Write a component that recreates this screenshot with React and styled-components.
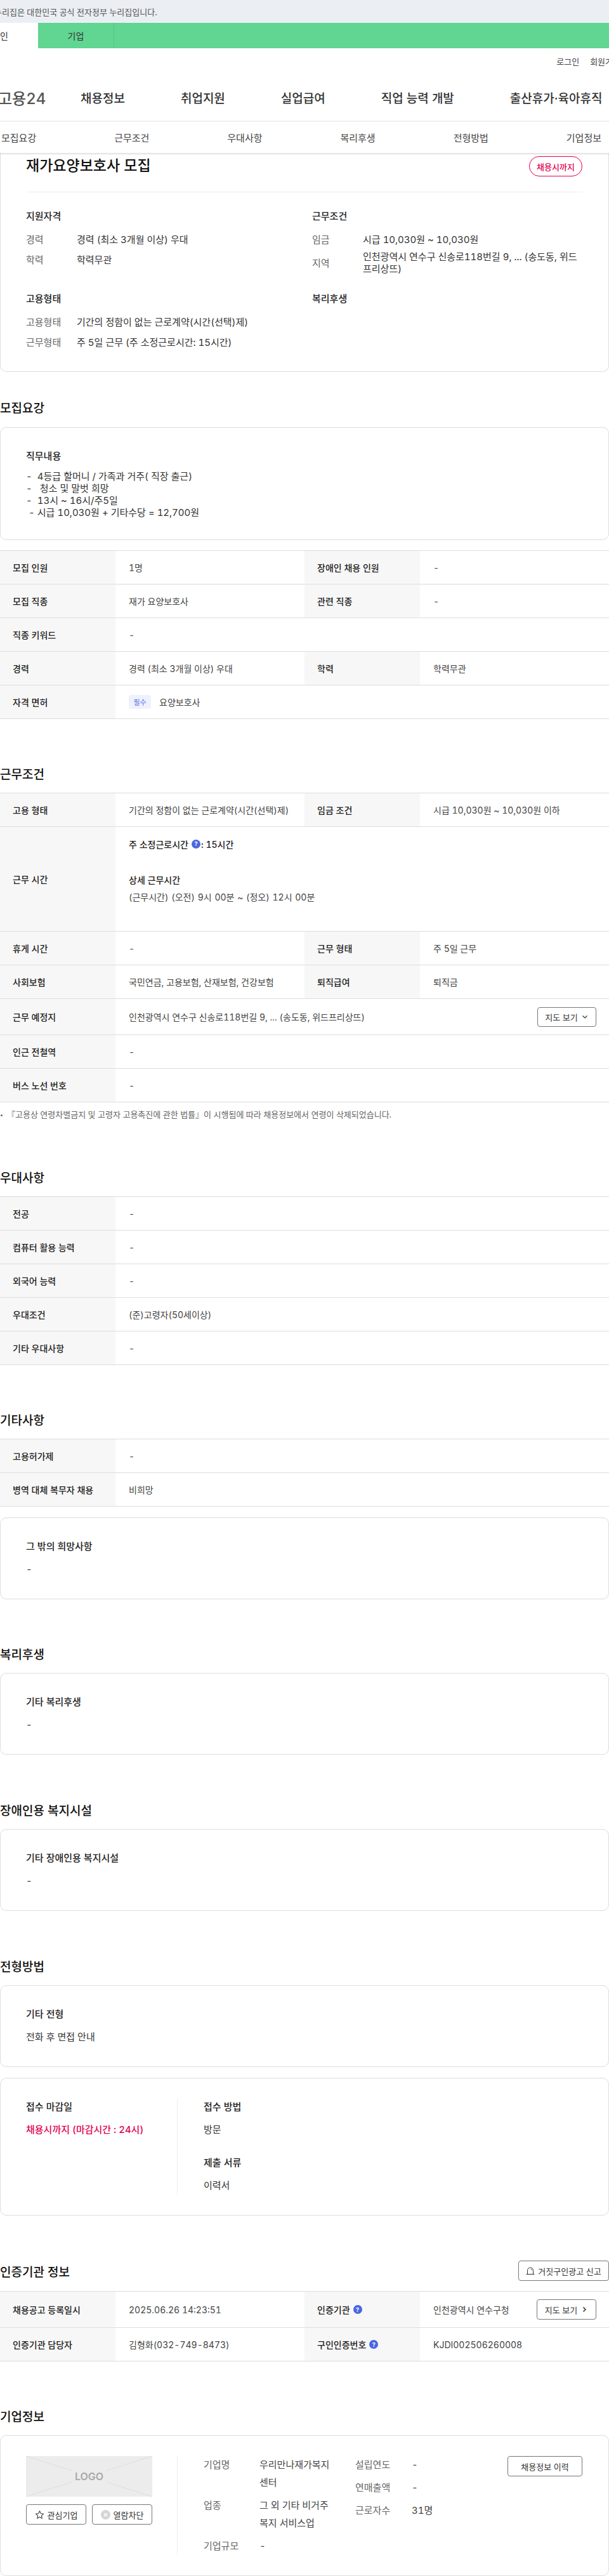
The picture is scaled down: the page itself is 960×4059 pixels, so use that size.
import styled, { createGlobalStyle } from "styled-components";

const GlobalStyle = createGlobalStyle`
  * {
    box-sizing: border-box;
  }

  body {
    margin: 0;
    background: #fff;
    color: #222;
    font-family: "Inter", "Noto Sans CJK KR", sans-serif;
    font-size: 14px;
    font-variant-numeric: tabular-nums;
    overflow-x: hidden;
  }
`

const Page = styled.div`
  width: 960px;
  height: 4059px;
  overflow: hidden;
`

const GovBar = styled.div`
  height: 36px;
  display: flex;
  align-items: center;
  background: #ebeff4;
  color: #555;
  font-size: 13px;
  white-space: nowrap;
  overflow: hidden;

  span {
    margin-left: -9px;
  }
`

const UserTabs = styled.div`
  height: 40px;
  display: flex;
  background: #61d592;
  color: #333;
  font-size: 14px;
`

const UserTab = styled.div`
  display: flex;
  align-items: center;
  justify-content: ${({ $active }) => ($active ? "flex-start" : "center")};
  width: ${({ $active }) => ($active ? "60px" : "120px")};
  background: ${({ $active }) => ($active ? "#fff" : "transparent")};
  border-right: ${({ $active }) => ($active ? "none" : "1px solid #55c684")};
`

const UtilRow = styled.div`
  height: 40px;
  display: flex;
  justify-content: flex-end;
  align-items: center;
  gap: 17px;
  margin-right: -18px;
  font-size: 13px;
  color: #444;
  white-space: nowrap;
`

const MainNav = styled.div`
  height: 76px;
  display: flex;
  align-items: center;
  border-bottom: 2px solid #eee;
  white-space: nowrap;
`

const Brand = styled.div`
  width: 130px;
  margin-left: -3px;
  font-size: 24px;
  font-weight: 500;
  color: #555;
  flex: none;
`

const NavList = styled.div`
  display: flex;
  gap: 88px;
  font-size: 19px;
  font-weight: 500;
  color: #333;
`

const SubNav = styled.div`
  height: 49px;
  display: flex;
  justify-content: space-between;
  align-items: center;
  padding: 0 12px 0 2px;
  font-size: 15px;
  color: #444;
  box-shadow: 0 2px 2px rgba(0, 0, 0, 0.12);
  position: relative;
`

const Card = styled.section`
  height: ${({ $h }) => $h || 129}px;
  margin-top: ${({ $mt }) => $mt ?? 15}px;
  margin-bottom: ${({ $mb }) => $mb || 0}px;
  padding: ${({ $pad }) => $pad || "35px 40px 0"};
  border: 1px solid #ddd;
  border-radius: 10px;
`

const Summary = styled(Card)`
  border-top: none;
  border-radius: 0 0 10px 10px;
  padding: 5px 41px 0 40px;
`

const TitleRow = styled.div`
  height: 57px;
  display: flex;
  justify-content: space-between;
  align-items: flex-start;
  border-bottom: 1px solid #eee;
`

const JobTitle = styled.h1`
  margin: 0;
  font-size: 23px;
  font-weight: 500;
  line-height: 30px;
  color: #111;
`

const DeadlineBadge = styled.div`
  width: 84px;
  height: 32px;
  display: flex;
  align-items: center;
  justify-content: center;
  border: 1px solid #e5004f;
  border-radius: 16px;
  color: #e5004f;
  font-size: 13px;
  font-weight: 500;
`

const SummaryGrid = styled.div`
  display: grid;
  grid-template-columns: 451px 1fr;
  grid-template-rows: 130px auto;
  padding-top: 28px;
`

const InfoRow = styled.dl`
  display: grid;
  grid-template-columns: 80px 1fr;
  align-items: center;
  margin: ${({ $mt }) => $mt || 13}px 0 0;
  font-size: 15px;
  line-height: 19px;
  color: #333;

  dt {
    color: #666;
  }

  dd {
    margin: 0;
  }
`

const SectionHead = styled.div`
  height: 32px;
  display: flex;
  align-items: center;
  justify-content: space-between;
  margin-top: ${({ $mt }) => $mt || 0}px;
`

const SectionTitle = styled.h2`
  margin: 0;
  font-size: 19px;
  font-weight: 500;
  color: #111;
`

const CardTitle = styled.div`
  margin-top: ${({ $mt }) => $mt || 0}px;
  font-size: 15px;
  line-height: 20px;
  font-weight: 500;
  color: #222;
`

const CardText = styled.div`
  margin-top: 16px;
  font-size: 15px;
  line-height: 20px;
  color: ${({ $red }) => ($red ? "#e5004f" : "#333")};
  font-weight: ${({ $red }) => ($red ? 500 : 400)};
`

const Description = styled.div`
  margin-top: 12px;
  font-size: 15px;
  line-height: 19px;
  color: #333;
  white-space: pre-wrap;
`

const Table = styled.div`
  border-top: 1px solid #ddd;
  margin-top: ${({ $mt }) => $mt ?? 15}px;
`

const Row = styled.div`
  min-height: ${({ $h }) => $h || 53}px;
  display: grid;
  grid-template-columns: ${({ $wide }) => ($wide ? "182px 1fr" : "182px 298px 182px 298px")};
  border-bottom: 1px solid #ddd;
`

const Th = styled.div`
  display: flex;
  align-items: center;
  gap: 5px;
  padding-left: 20px;
  background: #f7f7f7;
  font-size: 14px;
  font-weight: 500;
  color: #222;
`

const Td = styled.div`
  display: flex;
  align-items: center;
  justify-content: ${({ $between }) => ($between ? "space-between" : "flex-start")};
  padding: 0 20px 0 21px;
  font-size: 14px;
  color: #444;
  white-space: nowrap;
`

const HoursCell = styled.div`
  padding: 13px 21px 0;
  font-size: 14px;
  color: #444;
`

const HoursLine = styled.div`
  display: flex;
  align-items: center;
  height: 27px;
  margin-top: ${({ $mt }) => $mt || 0}px;
  color: ${({ $strong }) => ($strong ? "#222" : "#444")};
  font-weight: ${({ $strong }) => ($strong ? 500 : 400)};
  word-spacing: ${({ $strong }) => ($strong ? 0 : 1)}px;
`

const Tag = styled.span`
  width: 35px;
  height: 22px;
  display: inline-flex;
  align-items: center;
  justify-content: center;
  margin-right: 13px;
  border-radius: 3px;
  background: #eff1fd;
  color: #5a70e8;
  font-size: 11px;
`

const HelpDot = styled.span`
  width: 14px;
  height: 14px;
  display: inline-flex;
  align-items: center;
  justify-content: center;
  flex: none;
  border-radius: 50%;
  background: #4a67e0;
  color: #fff;
  font-size: 9px;
  font-weight: 700;
  margin: ${({ $m }) => $m || 0};
`

const Button = styled.button`
  height: ${({ $h }) => $h || 32}px;
  width: ${({ $w }) => $w}px;
  flex: none;
  display: inline-flex;
  align-items: center;
  justify-content: center;
  gap: 5px;
  padding: 0;
  background: #fff;
  border: 1px solid #777;
  border-radius: 4px;
  color: #333;
  font-family: inherit;
  font-size: 13px;
`

const Note = styled.p`
  margin: 10px 0 0;
  padding-left: 11px;
  position: relative;
  font-size: 13px;
  line-height: 19px;
  color: #666;

  &::before {
    content: "";
    position: absolute;
    left: 1px;
    top: 9px;
    width: 3px;
    height: 3px;
    border-radius: 50%;
    background: #666;
  }
`

const ApplyGrid = styled.div`
  display: grid;
  grid-template-columns: 239px 1fr;
`

const ApplyLeft = styled.div`
  padding-top: 3px;
  border-right: 1px solid #eee;
`

const ApplyRight = styled.div`
  padding: 3px 0 5px 41px;
`

const CompanyGrid = styled.div`
  display: grid;
  grid-template-columns: 239px 280px 240px 1fr;
`

const LogoSide = styled.div`
  border-right: 1px solid #eee;
  height: 156px;
`

const LogoBox = styled.div`
  width: 199px;
  height: 64px;
  position: relative;
  display: flex;
  align-items: center;
  justify-content: center;
  background: #ececec;
  color: #a8a8a8;
  font-size: 16px;
  font-weight: 600;

  svg {
    position: absolute;
    inset: 0;
  }

  span {
    position: relative;
  }
`

const LogoButtons = styled.div`
  display: flex;
  justify-content: space-between;
  width: 199px;
  margin-top: 12px;
`

const CompanyCol = styled.div`
  display: flex;
  flex-direction: column;
  padding-left: ${({ $pl }) => $pl || 0}px;
`

const CompanyRow = styled.dl`
  display: grid;
  grid-template-columns: ${({ $k }) => $k}px 1fr;
  margin: 0 0 ${({ $mb }) => $mb || 0}px;
  font-size: 15px;
  line-height: 28px;
  color: #444;

  dt {
    color: #666;
  }

  dd {
    margin: 0;
    width: ${({ $w }) => $w || "auto"};
  }
`

const CompanyAction = styled.div`
  display: flex;
  justify-content: flex-end;
`

const Chevron = ({ d, w = 1.2 }) => (
    <svg width="12" height="12" viewBox="0 0 12 12" fill="none" stroke="#333" strokeWidth={w}>
        <path d={d}/>
    </svg>
)

const ReportIcon = () => (
    <svg width="14" height="14" viewBox="0 0 14 14" fill="none" stroke="#333" strokeWidth="1">
        <path d="M2.5 12.5V6.5a4.5 4.5 0 0 1 9 0v6"/>
        <path d="M.5 12.5h13"/>
        <path d="M8 4.2a2.6 2.6 0 0 1 1.4 2"/>
    </svg>
)

const StarIcon = () => (
    <svg width="15" height="15" viewBox="0 0 24 24" fill="none" stroke="#444" strokeWidth="1.8" strokeLinejoin="round">
        <path d="m12 2.5 2.9 6.3 6.8.8-5 4.7 1.3 6.8-6-3.4-6 3.4 1.3-6.8-5-4.7 6.8-.8z"/>
    </svg>
)

const BlockIcon = () => (
    <svg width="15" height="15" viewBox="0 0 15 15">
        <circle cx="7.5" cy="7.5" r="7.5" fill="#d5d5d5"/>
        <path d="m5 5 5 5m0-5-5 5" stroke="#fff" strokeWidth="1.4"/>
    </svg>
)

const Pair = ({ k, children }) => (
    <Row $wide>
        <Th>{k}</Th>
        <Td>{children}</Td>
    </Row>
)

const jobDescription = `-  4등급 할머니 / 가족과 거주( 직장 출근)
-   청소 및 말벗 희망
-  13시 ~ 16시/주5일
 - 시급 10,030원 + 기타수당 = 12,700원`

const App = () => {
    return (
        <Page>
            <GlobalStyle/>
            <GovBar><span>누리집은 대한민국 공식 전자정부 누리집입니다.</span></GovBar>
            <UserTabs>
                <UserTab $active>인</UserTab>
                <UserTab>기업</UserTab>
            </UserTabs>
            <UtilRow>
                <span>로그인</span>
                <span>회원가입</span>
            </UtilRow>
            <MainNav>
                <Brand>고용24</Brand>
                <NavList>
                    <span>채용정보</span>
                    <span>취업지원</span>
                    <span>실업급여</span>
                    <span>직업 능력 개발</span>
                    <span>출산휴가·육아휴직</span>
                </NavList>
            </MainNav>
            <SubNav>
                <span>모집요강</span>
                <span>근무조건</span>
                <span>우대사항</span>
                <span>복리후생</span>
                <span>전형방법</span>
                <span>기업정보</span>
            </SubNav>

            <Summary $mt={0} $h={345}>
                <TitleRow>
                    <JobTitle>재가요양보호사 모집</JobTitle>
                    <DeadlineBadge>채용시까지</DeadlineBadge>
                </TitleRow>
                <SummaryGrid>
                    <div>
                        <CardTitle>지원자격</CardTitle>
                        <InfoRow $mt={17}><dt>경력</dt><dd>경력 (최소 3개월 이상) 우대</dd></InfoRow>
                        <InfoRow><dt>학력</dt><dd>학력무관</dd></InfoRow>
                    </div>
                    <div>
                        <CardTitle>근무조건</CardTitle>
                        <InfoRow $mt={17}><dt>임금</dt><dd>시급 10,030원 ~ 10,030원</dd></InfoRow>
                        <InfoRow $mt={8}><dt>지역</dt><dd>인천광역시 연수구 신송로118번길 9, ... (송도동, 위드프리상뜨)</dd></InfoRow>
                    </div>
                    <div>
                        <CardTitle>고용형태</CardTitle>
                        <InfoRow $mt={17}><dt>고용형태</dt><dd>기간의 정함이 없는 근로계약(시간(선택)제)</dd></InfoRow>
                        <InfoRow><dt>근무형태</dt><dd>주 5일 근무 (주 소정근로시간: 15시간)</dd></InfoRow>
                    </div>
                    <div>
                        <CardTitle>복리후생</CardTitle>
                    </div>
                </SummaryGrid>
            </Summary>

            <SectionHead $mt={39}><SectionTitle>모집요강</SectionTitle></SectionHead>
            <Card $mt={16} $h={178}>
                <CardTitle>직무내용</CardTitle>
                <Description>{jobDescription}</Description>
            </Card>
            <Table $mt={16}>
                <Row>
                    <Th>모집 인원</Th><Td>1명</Td>
                    <Th>장애인 채용 인원</Th><Td>-</Td>
                </Row>
                <Row>
                    <Th>모집 직종</Th><Td>재가 요양보호사</Td>
                    <Th>관련 직종</Th><Td>-</Td>
                </Row>
                <Pair k="직종 키워드">-</Pair>
                <Row>
                    <Th>경력</Th><Td>경력 (최소 3개월 이상) 우대</Td>
                    <Th>학력</Th><Td>학력무관</Td>
                </Row>
                <Pair k="자격 면허"><Tag>필수</Tag>요양보호사</Pair>
            </Table>

            <SectionHead $mt={69}><SectionTitle>근무조건</SectionTitle></SectionHead>
            <Table>
                <Row>
                    <Th>고용 형태</Th><Td>기간의 정함이 없는 근로계약(시간(선택)제)</Td>
                    <Th>임금 조건</Th><Td>시급 10,030원 ~ 10,030원 이하</Td>
                </Row>
                <Row $wide $h={165}>
                    <Th>근무 시간</Th>
                    <HoursCell>
                        <HoursLine $strong>주 소정근로시간<HelpDot $m="0 1px 0 5px">?</HelpDot>: 15시간</HoursLine>
                        <HoursLine $mt={29} $strong>상세 근무시간</HoursLine>
                        <HoursLine>(근무시간) (오전) 9시 00분 ~ (정오) 12시 00분</HoursLine>
                    </HoursCell>
                </Row>
                <Row>
                    <Th>휴게 시간</Th><Td>-</Td>
                    <Th>근무 형태</Th><Td>주 5일 근무</Td>
                </Row>
                <Row>
                    <Th>사회보험</Th><Td>국민연금, 고용보험, 산재보험, 건강보험</Td>
                    <Th>퇴직급여</Th><Td>퇴직금</Td>
                </Row>
                <Row $wide $h={57}>
                    <Th>근무 예정지</Th>
                    <Td $between>
                        인천광역시 연수구 신송로118번길 9, ... (송도동, 위드프리상뜨)
                        <Button $w={93} $h={31}>지도 보기<Chevron d="M2.5 4.5 6 8l3.5-3.5"/></Button>
                    </Td>
                </Row>
                <Pair k="인근 전철역">-</Pair>
                <Pair k="버스 노선 번호">-</Pair>
            </Table>
            <Note>『고용상 연령차별금지 및 고령자 고용촉진에 관한 법률』이 시행됨에 따라 채용정보에서 연령이 삭제되었습니다.</Note>

            <SectionHead $mt={72}><SectionTitle>우대사항</SectionTitle></SectionHead>
            <Table>
                <Pair k="전공">-</Pair>
                <Pair k="컴퓨터 활용 능력">-</Pair>
                <Pair k="외국어 능력">-</Pair>
                <Pair k="우대조건">(준)고령자(50세이상)</Pair>
                <Pair k="기타 우대사항">-</Pair>
            </Table>

            <SectionHead $mt={69}><SectionTitle>기타사항</SectionTitle></SectionHead>
            <Table>
                <Pair k="고용허가제">-</Pair>
                <Pair k="병역 대체 복무자 채용">비희망</Pair>
            </Table>
            <Card $mt={17}>
                <CardTitle>그 밖의 희망사항</CardTitle>
                <CardText>-</CardText>
            </Card>

            <SectionHead $mt={69}><SectionTitle>복리후생</SectionTitle></SectionHead>
            <Card>
                <CardTitle>기타 복리후생</CardTitle>
                <CardText>-</CardText>
            </Card>

            <SectionHead $mt={70}><SectionTitle>장애인용 복지시설</SectionTitle></SectionHead>
            <Card>
                <CardTitle>기타 장애인용 복지시설</CardTitle>
                <CardText>-</CardText>
            </Card>

            <SectionHead $mt={70}><SectionTitle>전형방법</SectionTitle></SectionHead>
            <Card $mb={17}>
                <CardTitle>기타 전형</CardTitle>
                <CardText>전화 후 면접 안내</CardText>
            </Card>
            <Card $mt={0} $h={217} $pad="32px 40px 0">
                <ApplyGrid>
                    <ApplyLeft>
                        <CardTitle>접수 마감일</CardTitle>
                        <CardText $red>채용시까지 (마감시간 : 24시)</CardText>
                    </ApplyLeft>
                    <ApplyRight>
                        <CardTitle>접수 방법</CardTitle>
                        <CardText>방문</CardText>
                        <CardTitle $mt={32}>제출 서류</CardTitle>
                        <CardText>이력서</CardText>
                    </ApplyRight>
                </ApplyGrid>
            </Card>

            <SectionHead $mt={71}>
                <SectionTitle>인증기관 정보</SectionTitle>
                <Button $w={143}><ReportIcon/>거짓구인광고 신고</Button>
            </SectionHead>
            <Table $mt={16}>
                <Row $h={57}>
                    <Th>채용공고 등록일시</Th><Td>2025.06.26 14:23:51</Td>
                    <Th>인증기관<HelpDot>?</HelpDot></Th>
                    <Td $between>
                        인천광역시 연수구청
                        <Button $w={94}>지도 보기<Chevron d="M4.5 2.5 8 6l-3.5 3.5" w={1.5}/></Button>
                    </Td>
                </Row>
                <Row>
                    <Th>인증기관 담당자</Th><Td>김형화(032-749-8473)</Td>
                    <Th>구인인증번호<HelpDot>?</HelpDot></Th><Td>KJDI002506260008</Td>
                </Row>
            </Table>

            <SectionHead $mt={69}><SectionTitle>기업정보</SectionTitle></SectionHead>
            <Card $h={222} $pad="32px 41px 0 40px">
                <CompanyGrid>
                    <LogoSide>
                        <LogoBox>
                            <svg width="199" height="64" viewBox="0 0 199 64" stroke="#ddd">
                                <path d="M0 0 72 23M199 0 127 23M0 64 72 41M199 64 127 41"/>
                            </svg>
                            <span>LOGO</span>
                        </LogoBox>
                        <LogoButtons>
                            <Button $w={95}><StarIcon/>관심기업</Button>
                            <Button $w={95}><BlockIcon/>열람차단</Button>
                        </LogoButtons>
                    </LogoSide>
                    <CompanyCol $pl={41}>
                        <CompanyRow $k={88} $w="112px" $mb={8}><dt>기업명</dt><dd>우리만나재가복지센터</dd></CompanyRow>
                        <CompanyRow $k={88} $w="112px" $mb={8}><dt>업종</dt><dd>그 외 기타 비거주 복지 서비스업</dd></CompanyRow>
                        <CompanyRow $k={88}><dt>기업규모</dt><dd>-</dd></CompanyRow>
                    </CompanyCol>
                    <CompanyCol>
                        <CompanyRow $k={89} $mb={8}><dt>설립연도</dt><dd>-</dd></CompanyRow>
                        <CompanyRow $k={89} $mb={8}><dt>연매출액</dt><dd>-</dd></CompanyRow>
                        <CompanyRow $k={89}><dt>근로자수</dt><dd>31명</dd></CompanyRow>
                    </CompanyCol>
                    <CompanyAction>
                        <Button $w={118}>채용정보 이력</Button>
                    </CompanyAction>
                </CompanyGrid>
            </Card>
        </Page>
    )
}

export default App
